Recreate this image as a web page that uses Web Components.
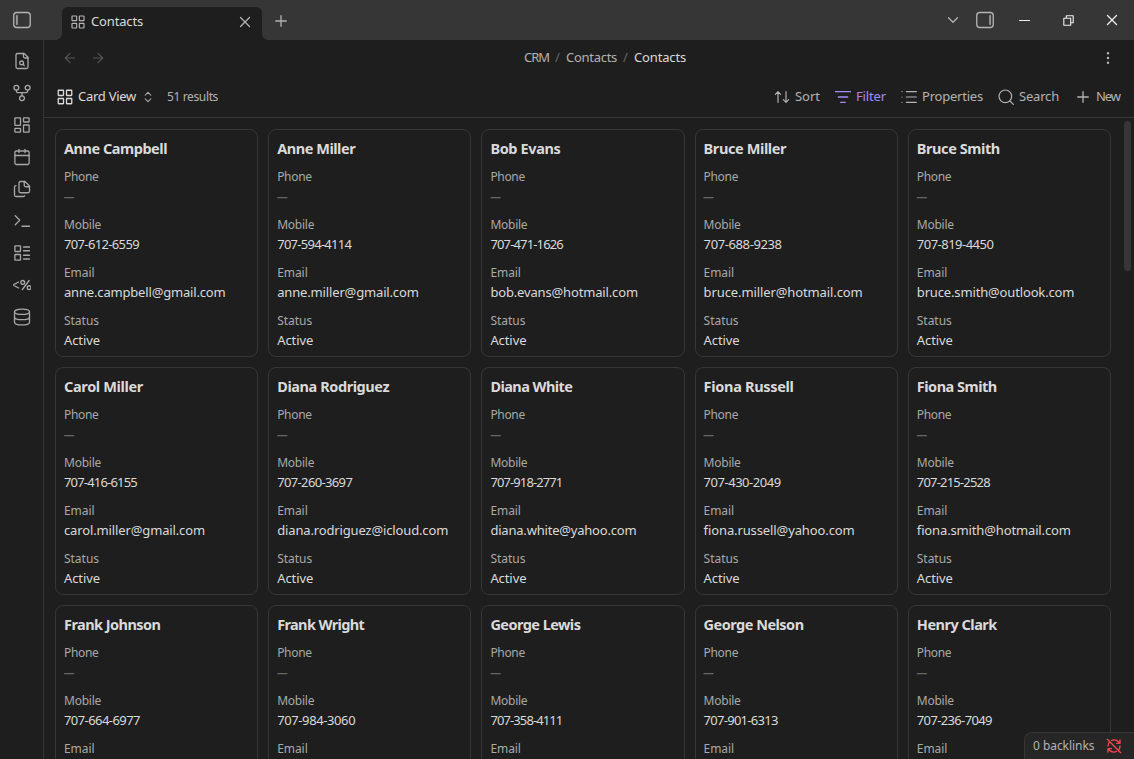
<!DOCTYPE html>
<html lang="en">
<head>
<meta charset="utf-8">
<title>Contacts</title>
<style>
  html, body { margin: 0; height: 100%; overflow: hidden; background: #1e1e1e; }
  body {
    --line: #363636;
    --text: #dadada;
    --muted: #b3b3b3;
    --faint: #666;
    --accent: #a68af9;
    color: var(--text);
    font: 13px/20px "Noto Sans", "Open Sans", sans-serif;
  }
</style>
</head>
<body>
<crm-app></crm-app>

<script>
  // 24x24 stroke icons
  const ICONS = {
    left: '<rect x="1" y="2" width="22" height="20" rx="4"/><rect x="4.5" y="5.5" width="1.4" height="13" rx=".7" fill="currentColor" stroke-width=".6"/>',
    right: '<rect x="1" y="2" width="22" height="20" rx="4"/><rect x="18.1" y="5.5" width="1.4" height="13" rx=".7" fill="currentColor" stroke-width=".6"/>',
    grid: '<rect x="3" y="3" width="7" height="7" rx=".6"/><rect x="14" y="3" width="7" height="7" rx=".6"/><rect x="14" y="14" width="7" height="7" rx=".6"/><rect x="3" y="14" width="7" height="7" rx=".6"/>',
    x: '<path d="M18 6 6 18M6 6l12 12"/>',
    plus: '<path d="M5 12h14M12 5v14"/>',
    down: '<path d="m6 9 6 6 6-6"/>',
    back: '<path d="m12 19-7-7 7-7M19 12H5"/>',
    forward: '<path d="M5 12h14M12 5l7 7-7 7"/>',
    more: '<circle cx="12" cy="12" r="1"/><circle cx="12" cy="5" r="1"/><circle cx="12" cy="19" r="1"/>',
    updown: '<path d="m7 15 5 5 5-5M7 9l5-5 5 5"/>',
    sort: '<path d="m22 16-4 4-4-4M18 20V4M2 8l4-4 4 4M6 4v16"/>',
    filter: '<path d="M0.5 4h23M5 12h14M8.5 20h7"/>',
    list: '<path d="M8 4h15M8 12h15M8 20h15M1.5 4h.01M1.5 12h.01M1.5 20h.01"/>',
    search: '<circle cx="11" cy="11" r="9.5"/><path d="m23 23-5-5"/>',
    filesearch: '<path d="M14 2v4a2 2 0 0 0 2 2h4"/><path d="M15 2H6a2 2 0 0 0-2 2v16a2 2 0 0 0 2 2h12a2 2 0 0 0 2-2V7z"/><circle cx="11.5" cy="14.5" r="2.5"/><path d="M13.3 16.3 15 18"/>',
    fork: '<circle cx="12" cy="19" r="3.2"/><circle cx="4.5" cy="5" r="3.2"/><circle cx="19.5" cy="5" r="3.2"/><path d="M4.5 8.2v1.3a2 2 0 0 0 2 2h11a2 2 0 0 0 2-2V8.2M12 11.5v4.3"/>',
    dashboard: '<rect x="2.5" y="2.5" width="7.5" height="10" rx=".6"/><rect x="14" y="2.5" width="7.5" height="5.5" rx=".6"/><rect x="14" y="12" width="7.5" height="9.5" rx=".6"/><rect x="2.5" y="16.5" width="7.5" height="5" rx=".6"/>',
    calendar: '<path d="M8 2v4M16 2v4M2.5 10h19"/><rect x="2.5" y="4" width="19" height="18" rx="2"/>',
    files: '<path d="M16 2h-6a2 2 0 0 0-2 2v11a2 2 0 0 0 2 2h10a2 2 0 0 0 2-2V8z"/><path d="M15 2v5a2 2 0 0 0 2 2h5"/><path d="M4 7.6a2 2 0 0 0-2 2V20a2 2 0 0 0 2 2h10a2 2 0 0 0 1.7-1"/>',
    terminal: '<path d="m3 17 6-6-6-6M12 19h10"/>',
    layoutlist: '<rect x="2.5" y="2.5" width="7.5" height="7.5" rx=".6"/><rect x="2.5" y="14" width="7.5" height="7.5" rx=".6"/><path d="M14 4h8M14 9h8M14 15h8M14 20h8"/>',
    template: '<path d="M7.5 8 0 12l7.5 4M21.5 6l-9 12"/><circle cx="13" cy="8.5" r="2.5"/><circle cx="21.5" cy="15.5" r="2.5"/>',
    database: '<ellipse cx="12" cy="5" rx="10" ry="3.6"/><path d="M2 5v14c0 2 4.5 3.6 10 3.6S22 21 22 19V5M2 12c0 2 4.5 3.6 10 3.6S22 14 22 12"/>',
    min: '<path d="M4 12h16"/>',
    restore: '<path d="M4.5 8.5h11v11h-11zM8.5 8V4.5h11v11H16"/>',
    syncoff: '<path d="M21 8 18.7 5.7A9.5 9.5 0 0 0 8.5 3.7M21 8h-5M21 3v5M3 12a9 9 0 0 1 2.6-6.3M21 12c0 2.3-.9 4.6-2.5 6.2M16 20.2A9.5 9.5 0 0 1 5.3 18.3L3 16M3 16h5M3 21v-5M22 22 2 2"/>'
  };

  const CONTACTS = [
    // name, mobile, email, each followed by its set width
    ["Anne Campbell", 103, "707-612-6559", 75, "anne.campbell@gmail.com", 161.5],
    ["Anne Miller", 78, "707-594-4114", 74, "anne.miller@gmail.com", 141.5],
    ["Bob Evans", 70, "707-471-1626", 72.5, "bob.evans@hotmail.com", 147.5],
    ["Bruce Miller", 82.5, "707-688-9238", 78, "bruce.miller@hotmail.com", 159],
    ["Bruce Smith", 83, "707-819-4450", 76.5, "bruce.smith@outlook.com", 157.5],
    ["Carol Miller", 79, "707-416-6155", 73, "carol.miller@gmail.com", 141],
    ["Diana Rodriguez", 112, "707-260-3697", 75, "diana.rodriguez@icloud.com", 171],
    ["Diana White", 82, "707-918-2771", 72, "diana.white@yahoo.com", 146],
    ["Fiona Russell", 90, "707-430-2049", 77, "fiona.russell@yahoo.com", 151],
    ["Fiona Smith", 80, "707-215-2528", 73, "fiona.smith@hotmail.com", 154],
    ["Frank Johnson", 96.5, "707-664-6977", 76],
    ["Frank Wright", 87, "707-984-3060", 78],
    ["George Lewis", 90, "707-358-4111", 72],
    ["George Nelson", 100, "707-901-6313", 74],
    ["Henry Clark", 80, "707-236-7049", 75]
  ];

  class UiIcon extends HTMLElement {
    connectedCallback() {
      const size = this.getAttribute("size") || 18;
      const stroke = this.getAttribute("stroke") || 1.75;
      this.attachShadow({mode: "open"}).innerHTML = `
        <style>
          :host { display: inline-flex; flex: none; }
          svg { display: block; fill: none; stroke: currentColor; stroke-linecap: round; stroke-linejoin: round; }
        </style>
        <svg width="${size}" height="${size}" viewBox="0 0 24 24" stroke-width="${stroke}">${ICONS[this.getAttribute("name")]}</svg>`;
    }
  }

  // one line of text, tracked so that it takes exactly w pixels
  class FitText extends HTMLElement {
    connectedCallback() {
      this.attachShadow({mode: "open"}).innerHTML = `
        <style>:host { display: inline-block; flex: none; white-space: nowrap; }</style><slot></slot>`;
      const w = Number(this.getAttribute("w"));
      if (w) {
        const diff = w - this.getBoundingClientRect().width;
        this.style.letterSpacing = diff / this.textContent.length + "px";
      }
    }
  }

  class TitleBar extends HTMLElement {
    connectedCallback() {
      this.attachShadow({mode: "open"}).innerHTML = `
        <style>
          :host { display: flex; height: 40px; flex: none; background: #363636; color: var(--muted); }
          .left { width: 62px; display: flex; align-items: center; padding-left: 13px; box-sizing: border-box; }
          .tab {
            position: relative; display: flex; align-items: center; width: 200px; height: 33px; margin-top: 7px;
            box-sizing: border-box; padding: 0 8px 3px 8px; background: #1e1e1e; border-radius: 6px 6px 0 0; color: var(--text);
          }
          .tab::before, .tab::after { content: ""; position: absolute; bottom: 0; width: 6px; height: 6px; }
          .tab::before { left: -6px; background: radial-gradient(circle at 0 0, transparent 5.5px, #1e1e1e 6px); }
          .tab::after { right: -6px; background: radial-gradient(circle at 100% 0, transparent 5.5px, #1e1e1e 6px); }
          .tab fit-text { margin: -2px auto 0 5px; }
          .tab ui-icon { color: var(--muted); }
          .new { display: flex; align-items: center; padding: 1px 0 0 10px; }
          .right { display: flex; align-items: center; margin-left: auto; }
          .right ui-icon { width: 44px; justify-content: center; }
          .right .win { color: #f0f0f0; }
        </style>
        <div class="left"><ui-icon name="left"></ui-icon></div>
        <div class="tab">
          <ui-icon name="grid" size="16"></ui-icon>
          <fit-text w="52">Contacts</fit-text>
          <ui-icon name="x" size="18"></ui-icon>
        </div>
        <div class="new"><ui-icon name="plus"></ui-icon></div>
        <div class="right">
          <ui-icon name="down" style="width:20px"></ui-icon>
          <ui-icon name="right"></ui-icon>
          <ui-icon class="win" name="min" size="15" style="width:34px"></ui-icon>
          <ui-icon class="win" name="restore" size="15" style="width:54px"></ui-icon>
          <ui-icon class="win" name="x" size="18" style="width:34px;margin-right:5px"></ui-icon>
        </div>`;
    }
  }

  class SideRibbon extends HTMLElement {
    connectedCallback() {
      const names = ["filesearch", "fork", "dashboard", "calendar", "files", "terminal", "layoutlist", "template", "database"];
      this.attachShadow({mode: "open"}).innerHTML = `
        <style>
          :host {
            display: flex; flex-direction: column; align-items: center; gap: 14px; flex: none;
            width: 44px; box-sizing: border-box; padding-top: 12px; border-right: 1px solid var(--line); color: #a8a8a8;
          }
        </style>
        ${names.map(n => `<ui-icon name="${n}"></ui-icon>`).join("")}`;
    }
  }

  class ViewHeader extends HTMLElement {
    connectedCallback() {
      this.attachShadow({mode: "open"}).innerHTML = `
        <style>
          :host { display: flex; align-items: center; height: 36px; flex: none; padding: 0 18px; color: var(--muted); }
          .nav { display: flex; gap: 12px; width: 100px; color: #555; }
          .crumbs { flex: 1; display: flex; justify-content: center; margin-top: -2px; }
          .sep { color: var(--faint); width: 17px; text-align: center; }
          .now { color: var(--text); }
          .end { width: 68px; text-align: right; line-height: 0; }
        </style>
        <div class="nav"><ui-icon name="back" size="16"></ui-icon><ui-icon name="forward" size="16"></ui-icon></div>
        <div class="crumbs">
          <fit-text w="25">CRM</fit-text><span class="sep">/</span>
          <fit-text w="51">Contacts</fit-text><span class="sep">/</span>
          <fit-text class="now" w="52">Contacts</fit-text>
        </div>
        <div class="end"><ui-icon name="more" size="16"></ui-icon></div>`;
    }
  }

  class ViewToolbar extends HTMLElement {
    connectedCallback() {
      this.attachShadow({mode: "open"}).innerHTML = `
        <style>
          :host {
            display: flex; align-items: center; height: 42px; flex: none; box-sizing: border-box;
            padding: 0 14px 0 12px; border-bottom: 1px solid var(--line); color: var(--muted);
          }
          fit-text { margin-top: -2px; }
          .view { display: flex; align-items: center; color: var(--text); }
          .view fit-text { margin: -2px 5px 0 4px; }
          .view ui-icon + fit-text + ui-icon { color: var(--muted); }
          .count { font-size: 12px; margin: 0 0 0 12px; }
          .tools { display: flex; gap: 15px; margin-left: auto; }
          .tool { display: flex; align-items: center; gap: 5px; }
          .on { color: var(--accent); }
        </style>
        <div class="view">
          <ui-icon name="grid"></ui-icon><fit-text w="58">Card View</fit-text><ui-icon name="updown" size="14"></ui-icon>
        </div>
        <fit-text class="count" w="51">51 results</fit-text>
        <div class="tools">
          <div class="tool"><ui-icon name="sort" size="16"></ui-icon><fit-text w="25">Sort</fit-text></div>
          <div class="tool on"><ui-icon name="filter" size="16" stroke="2"></ui-icon><fit-text w="30">Filter</fit-text></div>
          <div class="tool"><ui-icon name="list" size="16"></ui-icon><fit-text w="61">Properties</fit-text></div>
          <div class="tool"><ui-icon name="search" size="16"></ui-icon><fit-text w="40">Search</fit-text></div>
          <div class="tool" style="gap:4px"><ui-icon name="plus"></ui-icon><fit-text w="24">New</fit-text></div>
        </div>`;
    }
  }

  class CardField extends HTMLElement {
    connectedCallback() {
      this.attachShadow({mode: "open"}).innerHTML = `
        <style>
          :host { display: flex; flex-direction: column; align-items: flex-start; margin-top: 8px; }
          .label { font-size: 12px; color: #a9a9a9; }
          .value { height: 20px; margin-top: -1px; padding-bottom: 1px; }
        </style>
        <fit-text class="label" w="${this.getAttribute("w")}">${this.getAttribute("label")}</fit-text>
        <div class="value"><slot></slot></div>`;
    }
  }

  class ContactCard extends HTMLElement {
    set contact(c) {
      this.attachShadow({mode: "open"}).innerHTML = `
        <style>
          :host { display: block; box-sizing: border-box; height: 228px; padding: 8px; border: 1px solid var(--line); border-radius: 8px; }
          .name { display: block; width: max-content; font-size: 14.5px; font-weight: 700; line-height: 21px; }
          .none { color: var(--faint); font-family: "Liberation Sans", sans-serif; font-size: 10px; font-weight: 700; }
        </style>
        <fit-text class="name" w="${c[1]}">${c[0]}</fit-text>
        <card-field label="Phone" w="34.5"><fit-text class="none">—</fit-text></card-field>
        <card-field label="Mobile" w="37"><fit-text w="${c[3]}">${c[2]}</fit-text></card-field>
        <card-field label="Email" w="30.5">${c[4] ? `<fit-text w="${c[5]}">${c[4]}</fit-text>` : ""}</card-field>
        ${c[4] ? '<card-field label="Status" w="35"><fit-text w="36">Active</fit-text></card-field>' : ""}`;
    }
  }

  class CardGrid extends HTMLElement {
    connectedCallback() {
      this.attachShadow({mode: "open"}).innerHTML = `
        <style>
          :host { display: flex; flex: 1; min-height: 0; overflow: hidden; }
          .grid { flex: 1; display: grid; grid-template-columns: repeat(5, 1fr); gap: 10px; align-content: start; padding: 11px 13px 0 11px; }
          .bar { width: 7px; height: 150px; margin: 3px 3px 0 0; border-radius: 4px; background: #363636; }
        </style>
        <div class="grid"></div><div class="bar"></div>`;
      const grid = this.shadowRoot.querySelector(".grid");
      CONTACTS.forEach(c => {
        const card = document.createElement("contact-card");
        grid.append(card);
        card.contact = c;
      });
    }
  }

  class StatusBar extends HTMLElement {
    connectedCallback() {
      this.attachShadow({mode: "open"}).innerHTML = `
        <style>
          :host {
            position: absolute; right: 0; bottom: 0; display: flex; align-items: center; justify-content: space-between;
            width: 110px; height: 27px; box-sizing: border-box; padding: 0 12px 0 8px; color: var(--muted); font-size: 12px;
            background: #262626; border: 1px solid var(--line); border-width: 1px 0 0 1px; border-radius: 8px 0 0 0;
          }
          ui-icon { color: #fb464c; }
        </style>
        <fit-text w="61.5">0 backlinks</fit-text><ui-icon name="syncoff" size="16" stroke="2"></ui-icon>`;
    }
  }

  class CrmApp extends HTMLElement {
    connectedCallback() {
      this.attachShadow({mode: "open"}).innerHTML = `
        <style>
          :host { position: relative; display: flex; flex-direction: column; height: 100vh; overflow: hidden; }
          .body { flex: 1; display: flex; min-height: 0; }
          main { flex: 1; display: flex; flex-direction: column; min-width: 0; }
        </style>
        <title-bar></title-bar>
        <div class="body">
          <side-ribbon></side-ribbon>
          <main><view-header></view-header><view-toolbar></view-toolbar><card-grid></card-grid></main>
        </div>
        <status-bar></status-bar>`;
    }
  }

  customElements.define("ui-icon", UiIcon);
  customElements.define("fit-text", FitText);
  customElements.define("title-bar", TitleBar);
  customElements.define("side-ribbon", SideRibbon);
  customElements.define("view-header", ViewHeader);
  customElements.define("view-toolbar", ViewToolbar);
  customElements.define("card-field", CardField);
  customElements.define("contact-card", ContactCard);
  customElements.define("card-grid", CardGrid);
  customElements.define("status-bar", StatusBar);
  customElements.define("crm-app", CrmApp);
</script>
</body>
</html>
